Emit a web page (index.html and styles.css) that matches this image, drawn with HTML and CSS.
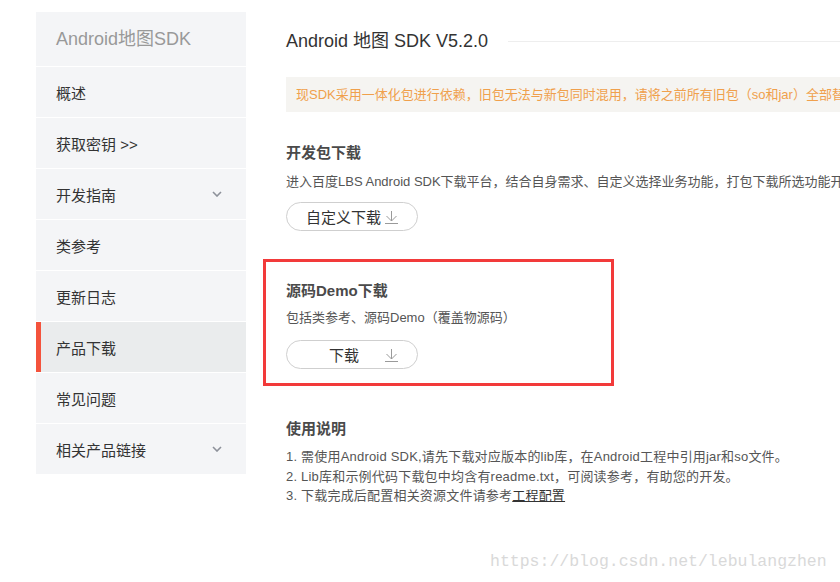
FILE: index.html
```html
<!DOCTYPE html>
<html lang="zh">
<head>
<meta charset="utf-8">
<title>Android 地图 SDK</title>
<link rel="stylesheet" href="styles.css">
</head>
<body>
<div class="page">
  <nav class="sidebar">
    <div class="side-head">Android地图SDK</div>
    <div class="side-item">概述</div>
    <div class="side-item">获取密钥 &gt;&gt;</div>
    <div class="side-item">开发指南<svg class="chev" width="10" height="6" viewBox="0 0 10 6"><path d="M1 1 L5 5 L9 1" fill="none" stroke="#8d919a" stroke-width="1.6"/></svg></div>
    <div class="side-item">类参考</div>
    <div class="side-item">更新日志</div>
    <div class="side-item active">产品下载</div>
    <div class="side-item">常见问题</div>
    <div class="side-item">相关产品链接<svg class="chev" width="10" height="6" viewBox="0 0 10 6"><path d="M1 1 L5 5 L9 1" fill="none" stroke="#8d919a" stroke-width="1.6"/></svg></div>
  </nav>
  <main class="main">
    <div class="title-row">
      <h1 class="title">Android 地图 SDK V5.2.0</h1>
      <div class="title-line"></div>
    </div>
    <div class="notice">现SDK采用一体化包进行依赖，旧包无法与新包同时混用，请将之前所有旧包（so和jar）全部替换为新包</div>

    <section class="sec sec-1">
      <h3 class="sec-title">开发包下载</h3>
      <p class="sec-desc">进入百度LBS Android SDK下载平台，结合自身需求、自定义选择业务功能，打包下载所选功能开发包</p>
      <a class="btn btn-custom"><span>自定义下载</span><svg class="dl" width="13" height="14" viewBox="0 0 13 14"><path d="M6.5 1 V11 M1.5 6 L6.5 11 L11.5 6 M0 13.5 H13" fill="none" stroke="#9a9a9a" stroke-width="1"/></svg></a>
    </section>

    <section class="sec sec-2">
      <h3 class="sec-title">源码Demo下载</h3>
      <p class="sec-desc">包括类参考、源码Demo（覆盖物源码）</p>
      <a class="btn btn-dl"><span>下载</span><svg class="dl" width="13" height="14" viewBox="0 0 13 14"><path d="M6.5 1 V11 M1.5 6 L6.5 11 L11.5 6 M0 13.5 H13" fill="none" stroke="#9a9a9a" stroke-width="1"/></svg></a>
      <div class="annot"></div>
    </section>

    <section class="sec sec-3">
      <h3 class="sec-title">使用说明</h3>
      <ol class="usage">
        <li>1. 需使用Android SDK,请先下载对应版本的lib库，在Android工程中引用jar和so文件。</li>
        <li>2. Lib库和示例代码下载包中均含有readme.txt，可阅读参考，有助您的开发。</li>
        <li>3. 下载完成后配置相关资源文件请参考<a class="link">工程配置</a></li>
      </ol>
    </section>
  </main>
</div>
<div class="watermark">https://blog.csdn.net/lebulangzhen</div>
</body>
</html>
```

FILE: styles.css
```css
html, body {
  margin: 0;
  padding: 0;
  background: #fff;
  overflow: hidden;
}
body {
  font-family: "Liberation Sans", "Noto Sans CJK SC", sans-serif;
  color: #333;
  width: 840px;
  height: 582px;
  position: relative;
}
.page {
  display: flex;
  padding: 12px 0 0 36px;
  gap: 40px;
}
.sidebar {
  width: 210px;
  flex: none;
  background: #f4f5f7;
  align-self: flex-start;
}
.side-head {
  height: 54px;
  line-height: 54px;
  padding-left: 20px;
  font-size: 18px;
  color: #999;
}
.side-item {
  height: 50px;
  border-top: 1px solid #fff;
  display: flex;
  align-items: center;
  justify-content: space-between;
  padding: 0 24px 0 20px;
  font-size: 15px;
  color: #333;
  position: relative;
}
.side-item.active {
  background: #eaeced;
}
.side-item.active::before {
  content: "";
  position: absolute;
  left: 0;
  top: 0;
  bottom: 0;
  width: 5px;
  background: #f4533c;
}
.chev { flex: none; }

.main {
  flex: 1;
  min-width: 0;
  padding-top: 17px;
}
.title-row {
  display: flex;
  align-items: center;
  height: 24px;
}
.title {
  margin: 0;
  font-size: 18px;
  font-weight: normal;
  color: #333;
  white-space: nowrap;
  line-height: 24px;
}
.title-line {
  flex: 1;
  height: 1px;
  background: #eeeeee;
  margin-left: 20px;
}
.notice {
  margin-top: 24px;
  height: 35px;
  line-height: 35px;
  background: #f5f4f1;
  color: #f0a04c;
  font-size: 13px;
  padding-left: 10px;
  white-space: nowrap;
  overflow: hidden;
}
.sec { position: relative; }
.sec-title {
  margin: 0;
  font-size: 15px;
  font-weight: bold;
  color: #4a4a4a;
  line-height: 20px;
}
.sec-desc {
  margin: 0;
  font-size: 13px;
  color: #555;
  line-height: 20px;
  white-space: nowrap;
}
.sec-1 { margin-top: 31px; }
.sec-1 .sec-desc { margin-top: 9px; }
.sec-1 .btn { margin-top: 10px; }
.sec-2 { margin-top: 50px; }
.sec-2 .sec-desc { margin-top: 7px; }
.sec-2 .btn { margin-top: 12px; }
.sec-3 { margin-top: 50px; }

.btn {
  width: 132px;
  height: 29px;
  box-sizing: border-box;
  border: 1px solid #cfcfcf;
  border-radius: 15px;
  display: flex;
  align-items: center;
  justify-content: space-between;
  font-size: 15px;
  color: #333;
  padding: 0 19px;
}
.btn-dl { padding-left: 42px; }
.dl { flex: none; }

.annot {
  position: absolute;
  left: -23px;
  top: -22px;
  width: 351px;
  height: 127px;
  box-sizing: border-box;
  border: 3px solid #f23a3a;
}

.usage {
  list-style: none;
  margin: 8px 0 0;
  padding: 0;
  font-size: 13px;
  color: #555;
  line-height: 19.5px;
  letter-spacing: 0.2px;
}
.link {
  color: #333;
  text-decoration: underline;
}
.watermark {
  position: absolute;
  left: 490px;
  top: 552px;
  font-family: "Liberation Mono", monospace;
  font-size: 16.5px;
  color: #d9d9d9;
}
```
